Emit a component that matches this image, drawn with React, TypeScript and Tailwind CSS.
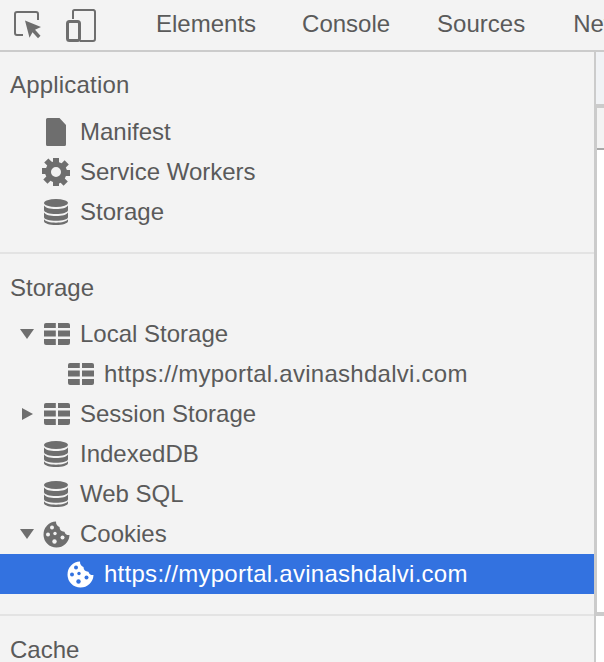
import type { ReactNode } from 'react';

const FONT = "font-['Liberation_Sans','Inter',Arial,sans-serif]";

const FileIcon = () => (
  <svg width="20" height="28" viewBox="0 0 20 28" className="fill-current">
    <path d="M2 0h11.500L20 7v19.500a1.500 1.500 0 0 1-1.500 1.500h-17A1.500 1.500 0 0 1 0 26.500V1.500A1.500 1.500 0 0 1 1.500 0z" />
  </svg>
);

const GearIcon = () => (
  <svg width="28" height="28" viewBox="0 0 28 28" className="fill-current">
    <path
      fillRule="evenodd"
      d="M11 0h6v4.200l2.600 1.100 3-3 4.200 4.200-3 3 1.100 2.500H28v6h-4.100l-1.100 2.600 3 3-4.200 4.200-3-3-1.600.7V28h-6v-4.100l-2.500-1.100-3 3-4.200-4.200 3-3L3.200 16H0v-6h4.100l1.100-2.500-3-3 4.200-3.900 3 3L11 4.100zM14 9a5 5 0 1 0 0 10 5 5 0 0 0 0-10z"
    />
  </svg>
);

const DbIcon = () => (
  <svg width="24" height="26" viewBox="0 0 24 26" className="fill-current">
    <ellipse cx="12" cy="4" rx="12" ry="4" />
    <path d="M0 6.500C1.500 9 6 10 12 10s10.500-1 12-3.500V11c0 2.500-5.500 4-12 4S0 13.500 0 11z" />
    <path d="M0 13.500C1.500 16 6 17 12 17s10.500-1 12-3.500V18c0 2.500-5.500 3.800-12 3.800S0 20.500 0 18z" />
    <path d="M0 20.300C1.500 22.500 6 23.700 12 23.700s10.500-1.200 12-3.400V22c0 2.500-5.500 4-12 4S0 24.500 0 22z" />
  </svg>
);

const GridIcon = () => (
  <svg width="26" height="22" viewBox="0 0 26 22" className="ml-0.5 fill-current">
    <path d="M2 0h9.800v5H0V2a2 2 0 0 1 2-2z" />
    <path d="M14 0h10a2 2 0 0 1 2 2v3H14z" />
    <rect x="0" y="7.500" width="11.800" height="6" />
    <rect x="14" y="7.500" width="12" height="6" />
    <path d="M0 16h11.800v6H2a2 2 0 0 1-2-2z" />
    <path d="M14 16h12v4a2 2 0 0 1-2 2H14z" />
  </svg>
);

// dots are painted in the row background colour
const CookieIcon = ({ dots }: { dots: string }) => (
  <svg width="27" height="27" viewBox="0 0 27 27" className="fill-current">
    <path d="M13 .5a13 13 0 1 0 13.500 13.500c-2.500.3-4.500-.8-5-3.300-2.800.2-5-1.800-5-4.700C14.500 5.500 12.800 3.300 13 .5z" />
    <circle cx="9" cy="6.500" r="2" fill={dots} />
    <circle cx="5" cy="13.500" r="2" fill={dots} />
    <circle cx="12" cy="12.500" r="1.700" fill={dots} />
    <circle cx="11.500" cy="20.500" r="2.200" fill={dots} />
    <circle cx="19.500" cy="16.500" r="2" fill={dots} />
  </svg>
);

const Row = ({
  indent,
  arrow,
  icon,
  label,
  selected,
}: {
  indent: 'top' | 'child';
  arrow?: 'open' | 'closed';
  icon: ReactNode;
  label: string;
  selected?: boolean;
}) => (
  <div
    className={`flex h-10 shrink-0 items-center ${indent === 'top' ? 'pl-5' : 'pl-[66px]'} ${
      selected ? 'bg-[#3372e0] text-white' : 'text-[#5a5a5a]'
    }`}
  >
    {indent === 'top' && (
      <div className="flex w-[22px] shrink-0 items-center">
        {arrow === 'open' && (
          <div className="h-0 w-0 border-x-[7.500px] border-t-[10px] border-x-transparent border-t-[#6e6e6e]" />
        )}
        {arrow === 'closed' && (
          <div className="ml-0.5 h-0 w-0 border-y-[6.500px] border-l-[11px] border-y-transparent border-l-[#6e6e6e]" />
        )}
      </div>
    )}
    <div
      className={`flex h-7 w-7 shrink-0 items-center justify-center ${
        selected ? 'text-white' : 'text-[#6e6e6e]'
      }`}
    >
      {icon}
    </div>
    <span
      className={`ml-2.5 text-2xl whitespace-nowrap ${indent === 'child' ? 'tracking-[0.27px]' : ''}`}
    >
      {label}
    </span>
  </div>
);

const Heading = ({ children }: { children: ReactNode }) => (
  <div className="flex h-10 shrink-0 items-center pl-2.5 text-2xl text-[#5a5a5a]">{children}</div>
);

export default function App() {
  return (
    <div className={`${FONT} flex h-[662px] w-[604px] flex-col overflow-hidden bg-[#f3f3f3]`}>
      <div className="flex h-[52px] shrink-0 items-center border-b-2 border-[#cbcbcb] text-2xl text-[#5a5a5a]">
        <div className="ml-[14px] flex text-[#6e6e6e]">
          <svg width="28" height="28" viewBox="0 0 28 28" fill="none">
            <path
              d="M9 24H3a2 2 0 0 1-2-2V3a2 2 0 0 1 2-2h19a2 2 0 0 1 2 2v6"
              stroke="currentColor"
              strokeWidth="2"
            />
            <path d="M11 9.500l16 6.500-6 2.800 5.500 6-2.500 2.500-5.500-6-3 5.500z" fill="currentColor" />
          </svg>
        </div>
        <div className="ml-[24px] flex text-[#6e6e6e]">
          <svg width="30" height="33" viewBox="0 0 30 33" fill="none">
            <path
              d="M7 10V2.500A1.500 1.500 0 0 1 8.500 1h18A2 2 0 0 1 29 3v27a2 2 0 0 1-2 2H14"
              stroke="currentColor"
              strokeWidth="2"
            />
            <rect x="1.500" y="12.500" width="12" height="19" rx="2" stroke="currentColor" strokeWidth="3" />
          </svg>
        </div>
        <div className="ml-[22px] h-8 w-0.5 bg-[#cbcbcb]" />
        <div className="mb-0.5 ml-[38px] flex whitespace-nowrap">
          <span>Elements</span>
          <span className="ml-[46px]">Console</span>
          <span className="ml-[47px]">Sources</span>
          <span className="ml-[48px]">Network</span>
        </div>
      </div>
      <div className="flex min-h-0 flex-1">
        <div className="flex w-[594px] shrink-0 flex-col">
          <div className="h-[13px] shrink-0" />
          <Heading>
            <span className="tracking-[0.2px]">Application</span>
          </Heading>
          <div className="h-[7px] shrink-0" />
          <Row indent="top" icon={<FileIcon />} label="Manifest" />
          <Row indent="top" icon={<GearIcon />} label="Service Workers" />
          <Row indent="top" icon={<DbIcon />} label="Storage" />
          <div className="mt-[20px] mb-[14px] h-0.5 shrink-0 bg-[#e3e3e3]" />
          <Heading>Storage</Heading>
          <div className="h-1.5 shrink-0" />
          <Row indent="top" arrow="open" icon={<GridIcon />} label="Local Storage" />
          <Row indent="child" icon={<GridIcon />} label="https://myportal.avinashdalvi.com" />
          <Row indent="top" arrow="closed" icon={<GridIcon />} label="Session Storage" />
          <Row indent="top" icon={<DbIcon />} label="IndexedDB" />
          <Row indent="top" icon={<DbIcon />} label="Web SQL" />
          <Row indent="top" arrow="open" icon={<CookieIcon dots="#f3f3f3" />} label="Cookies" />
          <Row indent="child" selected icon={<CookieIcon dots="#3372e0" />} label="https://myportal.avinashdalvi.com" />
          <div className="mt-5 mb-[14px] h-0.5 shrink-0 bg-[#e3e3e3]" />
          <Heading>Cache</Heading>
        </div>
        <div className="w-0.5 shrink-0 bg-[#cbcbcb]" />
        <div className="flex min-w-0 flex-1 flex-col bg-white">
          <div className="h-[52px] shrink-0 bg-[#f0f2f5]" />
          <div className="h-1 shrink-0 bg-[#cbcbcb]" />
          <div className="flex h-[504px] shrink-0 flex-col border-l border-[#cbcbcb]">
            <div className="h-[42px] shrink-0 border-b-2 border-[#a9a9a9] bg-[#f3f3f3]" />
          </div>
          <div className="h-1 shrink-0 bg-[#cbcbcb]" />
        </div>
      </div>
    </div>
  );
}
